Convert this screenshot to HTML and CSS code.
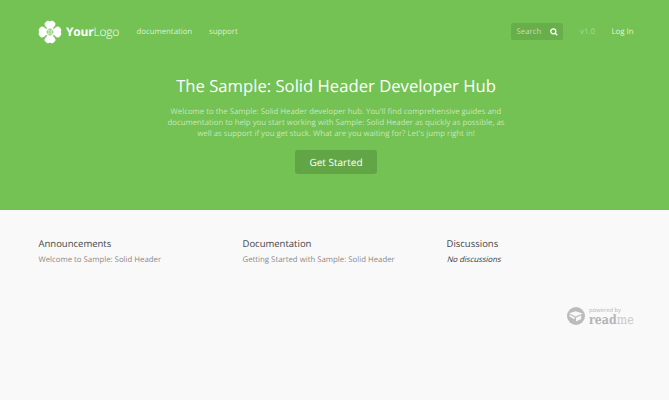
FILE: index.html
```html
<!DOCTYPE html>
<html lang="en">
<head>
<meta charset="utf-8">
<title>Developer Hub</title>
<link rel="stylesheet" href="styles.css">
</head>
<body>
<header class="hero">
  <nav class="nav">
    <a class="logo">
      <svg class="clover" viewBox="0 0 24 24">
        <g fill="#fff">
          <path id="leaf" d="M12 12L8.8 10C9.3 8.6 8.8 7.6 7.6 6.5C5.9 4.9 6.2 2.5 8 2C8.3 .7 11 .1 12 1.4C13 .1 15.7 .7 16 2C17.8 2.5 18.1 4.9 16.4 6.5C15.2 7.6 14.7 8.6 15.2 10Z"/>
          <use href="#leaf" transform="rotate(90 12 12)"/>
          <use href="#leaf" transform="rotate(180 12 12)"/>
          <use href="#leaf" transform="rotate(270 12 12)"/>
          <path d="M9 9h6v6h-6z"/>
        </g>
        <path class="veins" d="M12 8v8M8 12h8M9.8 9.8h4.4v4.4h-4.4z"/>
      </svg>
      <span class="brand"><b>Your</b>Logo</span>
    </a>
    <a class="link docs">documentation</a>
    <a class="link">support</a>
    <div class="search"><span>Search</span>
      <svg class="glass" viewBox="0 0 8 8"><circle cx="3.3" cy="3.3" r="2.5"/><path d="M5.2 5.2L7.3 7.3"/></svg>
    </div>
    <span class="version">v1.0</span>
    <a class="login">Log In</a>
  </nav>
  <h1>The Sample: Solid Header Developer Hub</h1>
  <p class="intro">Welcome to the Sample: Solid Header developer hub. You'll find comprehensive guides and<br>documentation to help you start working with Sample: Solid Header as quickly as possible, as<br>well as support if you get stuck. What are you waiting for? Let's jump right in!</p>
  <a class="button">Get Started</a>
</header>
<main class="columns">
  <section><h2>Announcements</h2><p>Welcome to Sample: Solid Header</p></section>
  <section><h2>Documentation</h2><p>Getting Started with Sample: Solid Header</p></section>
  <section><h2>Discussions</h2><p class="empty">No discussions</p></section>
</main>
<footer class="footer">
  <svg class="owl" viewBox="0 0 18 18">
    <circle cx="9" cy="9" r="9" fill="#bbb"/>
    <path d="M2 6.3L8.8 4.3L15.8 6.5L8.6 9.6Z" fill="#f9f9f9"/>
    <path d="M2.2 7.6L8 10.6L7.3 12.2L2.6 9.6Z" fill="#f9f9f9"/>
    <path d="M9 10.8L14.2 8.3V12L9 14.6Z" fill="#f9f9f9"/>
  </svg>
  <div class="wordmark">
    <div class="powered">powered by</div>
    <div class="name"><b>read</b><span>me</span></div>
  </div>
</footer>
</body>
</html>
```
FILE: styles.css
```css
* { box-sizing: border-box; }
body { margin: 0; height: 400px; overflow: hidden; background: #f9f9f9; font-family: "Open Sans", sans-serif; font-size: 7.8px; text-rendering: geometricPrecision; }
h1, h2, p { margin: 0; font-weight: 400; }
.hero { height: 210px; background: #73c253; color: #fff; padding: 19px 35px 0 38px; display: flex; flex-direction: column; align-items: center; }
.nav { width: 100%; height: 25px; display: flex; align-items: center; line-height: 13px; }
.logo { display: flex; align-items: center; width: 98.5px; }
.clover { width: 24px; height: 24px; margin-right: 4px; }
.veins { fill: none; stroke: #73c253; stroke-width: .7; }
.brand { font-size: 12px; line-height: 16px; letter-spacing: -.2px; font-weight: 300; }
.brand b { font-weight: 700; }
.link, .version, .login, .search span { padding-top: 2px; }
.link { color: #dcf0d4; }
.docs { width: 72.5px; }
.search { margin-left: auto; width: 52.5px; height: 17px; padding: 0 5px 0 6px; border-radius: 2.5px; background: #68ae4b; color: #c3dfb7; display: flex; align-items: center; justify-content: space-between; }
.glass { width: 8px; height: 8px; fill: none; stroke: #fff; stroke-width: 1.3; }
.version { margin-left: 17px; width: 31.5px; color: #abdb98; }
.login { width: 22.5px; color: #e3f3dd; white-space: nowrap; }
h1 { margin-top: 30px; font-size: 16.67px; line-height: 24px; }
.intro { margin-top: 9px; line-height: 11px; text-align: center; color: #c7e7ba; white-space: nowrap; }
.button { margin-top: 10px; width: 82px; height: 24px; border-radius: 3px; background: #62a547; font-size: 10px; line-height: 24px; text-align: center; }
.columns { display: grid; grid-template-columns: 204px 204px 1fr; padding: 27px 0 0 38.5px; height: 96px; }
h2 { font-size: 9.5px; line-height: 14px; color: #444; }
.columns p { margin-top: 3px; line-height: 13px; color: #8b8b8b; }
.columns .empty { width: 60px; color: #333; transform: skewX(-14deg); }
.footer { display: flex; justify-content: flex-end; padding-right: 34px; }
.owl { width: 18px; height: 18px; margin: 1px 4px 0 0; }
.wordmark { width: 46px; height: 20px; color: #b5b5b5; }
.powered { font-size: 5.8px; line-height: 8px; white-space: nowrap; }
.name { display: flex; padding-top: 1px; font-family: "DejaVu Serif", serif; font-size: 13px; line-height: 11px; transform: scaleX(.85); transform-origin: 0 0; }
.name span { color: #c8c8c8; }
```
